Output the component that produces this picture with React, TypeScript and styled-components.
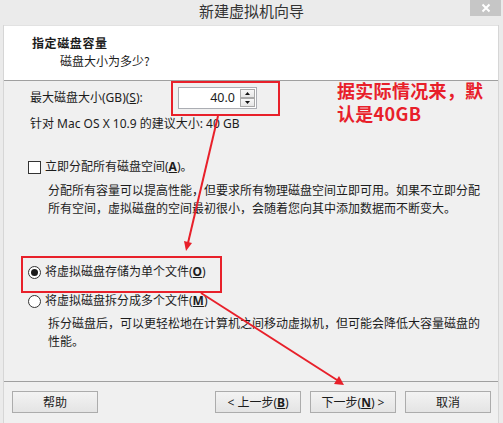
import React from 'react';
import styled, { createGlobalStyle } from 'styled-components';

const GlobalStyle = createGlobalStyle`
  html,
  body {
    margin: 0;
    padding: 0;
    width: 503px;
    height: 423px;
    overflow: hidden;
    background: #ebebeb;
  }

  body {
    font-family: 'Noto Sans', 'Noto Sans CJK SC', sans-serif;
    font-size: 12px;
    color: #1c1c1c;
  }
`;

const Window = styled.div`
  position: relative;
  width: 503px;
  height: 423px;
  display: flex;
  flex-direction: column;
  background: #ebebeb;
`;

const TitleBar = styled.div`
  height: 25px;
  display: grid;
  grid-template-columns: 1fr auto 1fr;
  align-items: start;
`;

const Title = styled.div`
  grid-column: 2;
  font-family: 'Noto Sans CJK SC', sans-serif;
  font-size: 15px;
  line-height: 22px;
  color: #333;
`;

const CloseButton = styled.div`
  grid-column: 3;
  justify-self: end;
  width: 31px;
  height: 16px;
  margin-right: 2px;
  background: #c6c6c6;
  display: flex;
  align-items: center;
  justify-content: center;
`;

const Client = styled.div`
  flex: 1;
  margin: 0 4px 0 3px;
  display: flex;
  flex-direction: column;
  border-left: 1px solid #d6d6d6;
  border-right: 1px solid #d6d6d6;
`;

const Header = styled.div`
  height: 56px;
  box-sizing: border-box;
  background: #fff;
  border-bottom: 1px solid #a0a0a0;
  padding: 8px 0 0 28px;
  border-top: 1px solid #e2e2e2;
`;

const HeaderTitle = styled.div`
  font-family: 'Noto Sans CJK SC', sans-serif;
  font-weight: bold;
  letter-spacing: 0.6px;
  line-height: 18px;
`;

const HeaderSub = styled.div`
  font-family: 'Noto Sans CJK SC', sans-serif;
  line-height: 18px;
  padding-left: 28px;
`;

const Body = styled.div`
  flex: 1;
  background: #f0f0f0;
  padding: 6px 0 0 26px;
  display: flex;
  flex-direction: column;
`;

const Row = styled.div<{ $top?: number }>`
  display: flex;
  align-items: center;
  margin-top: ${(p) => p.$top ?? 0}px;
  line-height: 18px;
`;

const FieldLabel = styled.span`
  width: 148px;
`;

const SpinBox = styled.div`
  width: 79px;
  height: 22px;
  box-sizing: border-box;
  border: 1px solid #abadb3;
  background: #fff;
  display: flex;
  align-items: center;
`;

const SpinValue = styled.span`
  flex: 1;
  text-align: right;
  padding-right: 5px;
  font-size: 12.5px;
`;

const SpinButtons = styled.div`
  display: flex;
  flex-direction: column;
  margin-right: 1px;
`;

const SpinButton = styled.div`
  width: 15px;
  height: 9px;
  box-sizing: border-box;
  border: 1px solid #a9a9a9;
  background: linear-gradient(#f7f7f7, #e6e6e6);
  display: flex;
  align-items: center;
  justify-content: center;
`;

const Text = styled.div<{ $top?: number; $indent?: number }>`
  margin-top: ${(p) => p.$top ?? 0}px;
  padding-left: ${(p) => p.$indent ?? 0}px;
  line-height: 18px;
`;

const CheckBox = styled.span`
  width: 13px;
  height: 13px;
  box-sizing: border-box;
  border: 1px solid #333;
  background: #fff;
  margin: 0 4px 0 -2px;
`;

const Radio = styled.span<{ $checked?: boolean }>`
  width: 13px;
  height: 13px;
  box-sizing: border-box;
  border-radius: 50%;
  border: 1px solid #333;
  background: #fff;
  margin: 0 4px 0 -2px;
  display: flex;
  align-items: center;
  justify-content: center;

  &::after {
    content: '';
    width: 7px;
    height: 7px;
    border-radius: 50%;
    background: ${(p) => (p.$checked ? '#1a1a1a' : 'transparent')};
  }
`;

const Key = styled.span`
  text-decoration: underline;
  font-weight: bold;
`;

const Footer = styled.div`
  height: 42px;
  box-sizing: border-box;
  background: #f0f0f0;
  border-top: 1px solid #a0a0a0;
  padding: 9px 7px 0 8px;
  display: flex;
  gap: 9px;
`;

const Button = styled.div<{ $push?: boolean }>`
  width: 86px;
  height: 22px;
  box-sizing: border-box;
  border: 1px solid #acacac;
  background: linear-gradient(#f3f3f3, #e4e4e4);
  display: flex;
  align-items: center;
  justify-content: center;
  margin-left: ${(p) => (p.$push ? 'auto' : '0')};
`;

const Overlay = styled.svg`
  position: absolute;
  left: 0;
  top: 0;
  pointer-events: none;
`;

const Note = styled.div`
  position: absolute;
  left: 337px;
  top: 79px;
  font-family: 'Noto Sans CJK SC', sans-serif;
  font-weight: bold;
  font-size: 18px;
  line-height: 23px;
  letter-spacing: 0.3px;
  color: #e8202a;
`;

const red = '#e8202a';

export default function App() {
  return (
    <Window>
      <GlobalStyle />
      <TitleBar>
        <Title>新建虚拟机向导</Title>
        <CloseButton>
          <svg width="10" height="10" viewBox="0 0 10 10">
            <path d="M1.5 1.5 L8.5 8.5 M8.5 1.5 L1.5 8.5" stroke="#fff" strokeWidth="2" />
          </svg>
        </CloseButton>
      </TitleBar>

      <Client>
        <Header>
          <HeaderTitle>指定磁盘容量</HeaderTitle>
          <HeaderSub>磁盘大小为多少?</HeaderSub>
        </Header>

        <Body>
          <Row>
            <FieldLabel>
              最大磁盘大小(GB)(<u>S</u>):
            </FieldLabel>
            <SpinBox>
              <SpinValue>40.0</SpinValue>
              <SpinButtons>
                <SpinButton>
                  <svg width="5" height="3" viewBox="0 0 5 3">
                    <path d="M0 3 L2.5 0 L5 3 Z" fill="#111" />
                  </svg>
                </SpinButton>
                <SpinButton>
                  <svg width="5" height="3" viewBox="0 0 5 3">
                    <path d="M0 0 L2.5 3 L5 0 Z" fill="#111" />
                  </svg>
                </SpinButton>
              </SpinButtons>
            </SpinBox>
          </Row>
          <Text $top={6}>针对 Mac OS X 10.9 的建议大小: 40 GB</Text>

          <Row $top={25}>
            <CheckBox />
            <span>
              立即分配所有磁盘空间(<Key>A</Key>)。
            </span>
          </Row>
          <Text $top={6} $indent={18}>
            分配所有容量可以提高性能，但要求所有物理磁盘空间立即可用。如果不立即分配
            <br />
            所有空间，虚拟磁盘的空间最初很小，会随着您向其中添加数据而不断变大。
          </Text>

          <Row $top={45}>
            <Radio $checked />
            <span>
              将虚拟磁盘存储为单个文件(<Key>O</Key>)
            </span>
          </Row>
          <Row $top={11}>
            <Radio />
            <span>
              将虚拟磁盘拆分成多个文件(<Key>M</Key>)
            </span>
          </Row>
          <Text $top={5} $indent={18}>
            拆分磁盘后，可以更轻松地在计算机之间移动虚拟机，但可能会降低大容量磁盘的
            <br />
            性能。
          </Text>
        </Body>

        <Footer>
          <Button>帮助</Button>
          <Button $push>
            &lt; 上一步(<Key>B</Key>)
          </Button>
          <Button>
            下一步(<Key>N</Key>) &gt;
          </Button>
          <Button>取消</Button>
        </Footer>
      </Client>

      <Overlay width="503" height="423" viewBox="0 0 503 423">
        <rect x="172" y="82" width="107" height="33" fill="none" stroke={red} strokeWidth="2" />
        <rect x="22" y="257" width="199" height="35" fill="none" stroke={red} strokeWidth="2" />
        <line x1="218" y1="116" x2="188" y2="243" stroke={red} strokeWidth="2" />
        <polygon points="192,243 184,241 186,251" fill={red} />
        <line x1="201" y1="293" x2="337" y2="380" stroke={red} strokeWidth="2" />
        <polygon points="334,384 339,376 344,385" fill={red} />
      </Overlay>
      <Note>
        据实际情况来，默
        <br />
        认是40GB
      </Note>
    </Window>
  );
}
